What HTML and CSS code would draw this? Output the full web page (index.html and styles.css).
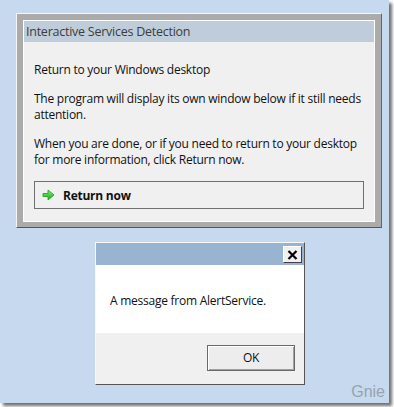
FILE: index.html
```html
<!DOCTYPE html>
<html lang="en">

<head>
    <meta charset="UTF-8">
    <title>Interactive Services Detection</title>
    <link rel="stylesheet" href="styles.css">
</head>

<body>
    <div class="shot">
        <!-- big detection dialog -->
        <div class="isd">
            <div class="isd-inner">
                <div class="isd-title">Interactive Services Detection</div>
                <div class="isd-body">
                    <p>Return to your Windows desktop</p>
                    <p>The program will display its own window below if it still needs attention.</p>
                    <p>When you are done, or if you need to return to your desktop for more information, click Return now.</p>
                    <div class="return-btn">
                        <svg class="arrow" width="13" height="12" viewBox="0 0 13 12">
                            <defs>
                                <linearGradient id="g" x1="0" y1="0" x2="0" y2="1">
                                    <stop offset="0" stop-color="#7df07a" />
                                    <stop offset="1" stop-color="#14b01a" />
                                </linearGradient>
                            </defs>
                            <path d="M1 4.5 H6 V1 L12 6 L6 11 V7.5 H1 Z" fill="url(#g)" stroke="#1c9a22" stroke-width="0.8" stroke-linejoin="round" />
                        </svg>
                        <span>Return now</span>
                    </div>
                </div>
            </div>
        </div>

        <!-- alert message box -->
        <div class="msgbox">
            <div class="msg-title">
                <div class="close-btn">
                    <svg width="11" height="10" viewBox="0 0 11 10">
                        <path d="M1.5 1 L9.5 9 M9.5 1 L1.5 9" stroke="#000" stroke-width="2.2" />
                    </svg>
                </div>
            </div>
            <div class="msg-body">A message from AlertService.</div>
            <div class="msg-footer">
                <div class="ok-btn">OK</div>
            </div>
        </div>

        <div class="mark">Gnie</div>
    </div>
</body>

</html>
```

FILE: styles.css
```css
* {
    margin: 0;
    padding: 0;
    box-sizing: border-box;
}

body {
    width: 394px;
    height: 407px;
    background: #fff;
    font-family: "Open Sans", "Noto Sans", sans-serif;
    font-size: 12px;
    letter-spacing: -0.25px;
    color: #111;
}

.shot {
    position: relative;
    width: 389px;
    height: 403px;
    background: #c7d9ee;
    box-shadow: 3px 3px 3px rgba(50, 50, 50, 0.7);
    padding: 13px 0 0 16px;
    display: flex;
    flex-direction: column;
}

.isd {
    width: 366px;
    background: #ababab;
    border: 1px solid;
    border-color: #f6f6f6 #666 #555 #f6f6f6;
    padding: 6px 6px 5px;
}

.isd-inner {
    border: 1px solid #fff;
    background: #f0f0f0;
}

.isd-title {
    background: #bfcddb;
    height: 21px;
    line-height: 21px;
    padding-left: 2px;
    color: #3c3c3c;
    font-size: 12.5px;
}

.isd-body {
    padding: 20px 10px 12px;
}

.isd-body p {
    line-height: 16px;
    margin-bottom: 13px;
}

.return-btn {
    height: 28px;
    border: 1px solid #707070;
    display: flex;
    align-items: center;
    padding-left: 7px;
    gap: 8px;
    font-weight: bold;
}

.msgbox {
    width: 210px;
    margin: 14px 0 0 79px;
    border: 1px solid;
    border-color: #f8f8f8 #555 #555 #f8f8f8;
    background: #f0f0f0;
}

.msg-title {
    height: 22px;
    background: #99b4d1;
    display: flex;
    justify-content: flex-end;
    padding: 3px 2px 0 0;
}

.close-btn {
    width: 19px;
    height: 17px;
    background: #f0f0f0;
    border: 1px solid;
    border-color: #fff #404040 #404040 #fff;
    display: flex;
    align-items: center;
    justify-content: center;
}

.msg-body {
    background: #fff;
    height: 68px;
    padding: 28px 0 0 14px;
    line-height: 16px;
}

.msg-footer {
    height: 51px;
    display: flex;
    justify-content: flex-end;
    padding: 12px 9px 0 0;
}

.ok-btn {
    width: 88px;
    height: 26px;
    border: 1px solid #6a6a6a;
    box-shadow: inset 1px 1px #fff, inset -1px -1px #a0a0a0;
    background: #ededed;
    text-align: center;
    line-height: 24px;
}

.mark {
    position: absolute;
    right: 4px;
    bottom: 2px;
    font-family: "Liberation Sans", sans-serif;
    font-size: 16px;
    letter-spacing: 0;
    color: #97a3b1;
}
```
